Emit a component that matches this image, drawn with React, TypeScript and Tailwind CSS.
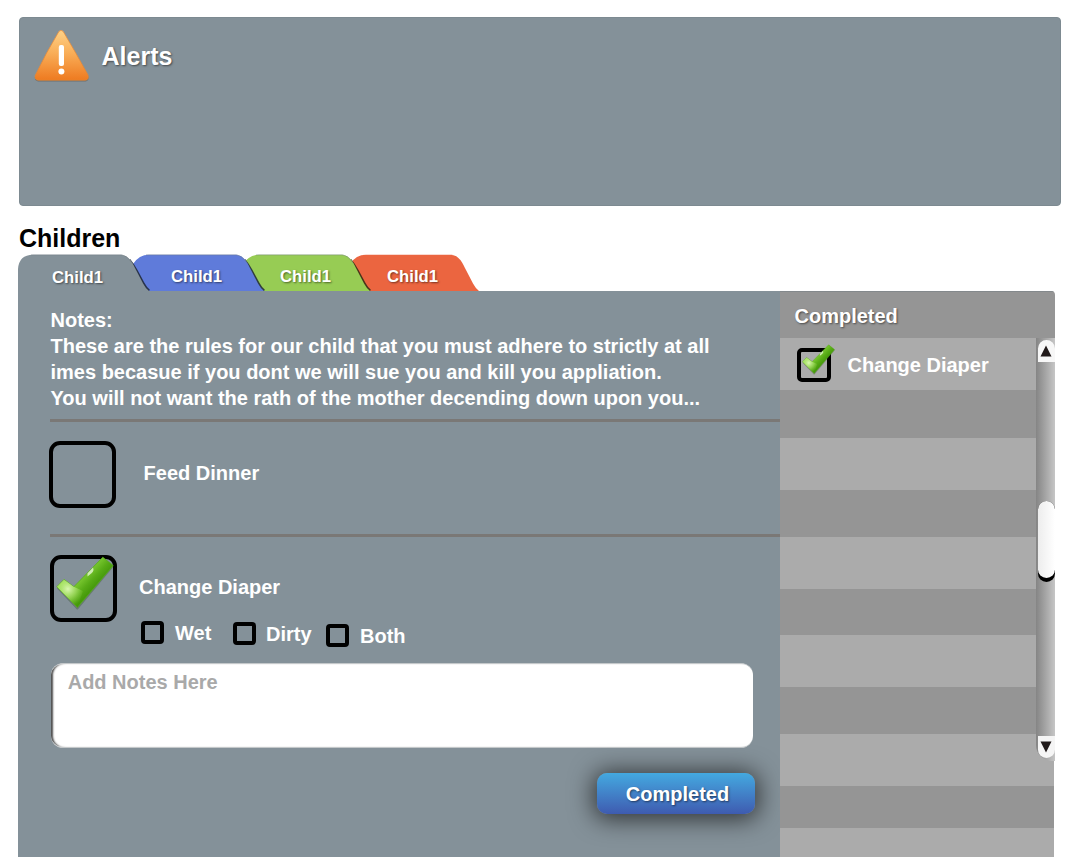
import React, { useId } from "react";

const textShadow = "[text-shadow:1px_1px_2px_rgba(0,0,0,0.5)]";

function WarningIcon() {
  return (
    <svg width="56" height="54" viewBox="0 0 56 54" className="block shrink-0">
      <defs>
        <linearGradient id="warn" x1="0" y1="0" x2="0" y2="1">
          <stop offset="0" stopColor="#ffd287" />
          <stop offset="0.45" stopColor="#f9ae58" />
          <stop offset="1" stopColor="#ee7a20" />
        </linearGradient>
      </defs>
      <path d="M24.8 2.2Q27 -0.6 29.3 2.2Q42 24 54.3 45.8Q55.6 51 51.6 51.4H4.2Q0.2 51 1 46.4Q12 24 24.8 2.2Z" fill="#4f4a45" opacity="0.45" />
      <path d="M24.8 1.6Q27 -1 29.3 1.6Q42 23 54 45Q55.2 49.9 51.4 50.2H4.2Q0.4 49.9 1.2 45.4Q12 23 24.8 1.6Z" fill="url(#warn)" stroke="#e98a35" strokeWidth="0.7" />
      <rect x="24.8" y="15" width="5.2" height="21" rx="2" fill="#fff" />
      <circle cx="27.4" cy="41.6" r="3" fill="#fff" />
    </svg>
  );
}

function CheckMark({ className }: { className: string }) {
  const id = useId();
  return (
    <svg viewBox="0 0 58 54" className={className}>
      <defs>
        <linearGradient id={id + "g"} gradientUnits="userSpaceOnUse" x1="20" y1="12" x2="41" y2="32">
          <stop offset="0" stopColor="#96dc4c" />
          <stop offset="0.4" stopColor="#78c62f" />
          <stop offset="0.68" stopColor="#57ab16" />
          <stop offset="1" stopColor="#3f9307" />
        </linearGradient>
        <radialGradient id={id + "h"} gradientUnits="userSpaceOnUse" cx="12" cy="33" r="17">
          <stop offset="0" stopColor="#e4fbc0" stopOpacity="0.9" />
          <stop offset="0.5" stopColor="#b9ea7c" stopOpacity="0.55" />
          <stop offset="1" stopColor="#9cda55" stopOpacity="0" />
        </radialGradient>
      </defs>
      <path d="M1 32.6L8 24L19 31L47 1.6L57.6 10.6L22 53.2Q21 54 20 52.6Z" fill="#24430f" opacity="0.3" />
      <path
        d="M0.8 30.8L8 23.4L17.8 30.8L46.8 1.2L57.2 9.6L21.4 51.4Z"
        fill={`url(#${id}g)`}
        stroke="#58ad1d"
        strokeWidth="0.8"
        strokeLinejoin="round"
      />
      <path d="M0.8 30.8L8 23.4L17.8 30.8L27 35L21.4 51.4Z" fill={`url(#${id}h)`} />
      <path d="M31.5 17.2L37 11.6Q38.5 15 35.5 17.2L31.5 20.5Z" fill="#eef9e2" opacity="0.75" />
    </svg>
  );
}

interface TabProps {
  label: string;
  fill: string;
  place: string;
  textPlace: string;
  width: number;
  edge?: string;
  square?: boolean;
}

function Tab({ label, fill, place, textPlace, width: w, edge, square }: TabProps) {
  const right = `C${w - 19} 0.7 ${w - 16} 10.5 ${w - 13} 16L${w - 6} 29.5Q${w - 3} 35 ${w} 37`;
  const left = square ? "M0 37V15Q1 0.7 15 0.7" : "M14 37L0 10Q6 0.7 16 0.7";
  return (
    <button className={`relative h-[37px] shrink-0 pt-2 text-left ${place}`}>
      <svg width={w + 4} height="37" viewBox={`0 0 ${w + 4} 37`} className="absolute top-0 left-0">
        {edge && (
          <path
            d={`M${w - 20} 6Q${w - 16} 11 ${w - 13} 16.5L${w - 6} 29.5Q${w - 3} 35 ${w} 37`}
            fill="none"
            stroke={edge}
            strokeWidth="3.2"
            opacity="0.85"
          />
        )}
        <path d={`${left}H${w - 29}${right}Z`} fill={fill} />
        {edge && <path d={`M13 0.9H${w - 28}Q${w - 22} 1.4 ${w - 17} 9`} fill="none" stroke="#6f7a80" strokeWidth="1" opacity="0.45" />}
      </svg>
      <span className={`relative block text-[16.7px] leading-5 text-white ${textPlace} ${textShadow}`}>{label}</span>
    </button>
  );
}

function SmallOption({ label, className, gap }: { label: string; className: string; gap: string }) {
  return (
    <label className={`flex items-start ${className} ${gap}`}>
      <span className="size-[23px] shrink-0 rounded-[4px] border-4 border-black" />
      <span className="-mt-px whitespace-nowrap leading-[26px]">{label}</span>
    </label>
  );
}

function ScrollBar() {
  return (
    <div className="absolute top-[47px] right-0 flex h-[423px] w-[19px] flex-col items-end rounded-bl-[16px] bg-linear-to-r from-[#858585] via-[#a5a5a5] to-[#c6c6c6] pr-[0.5px]">
      <div className="mt-[2px] flex h-[22px] w-[17px] shrink-0 justify-center rounded-t-[9px] bg-[#f7f7f7]">
        <svg width="12" height="12" viewBox="0 0 12 12" className="mt-[5px]">
          <path d="M6 0.5L11.5 11.5H0.5Z" fill="#211a1a" />
        </svg>
      </div>
      <div className="mt-[139px] h-[81px] w-[17px] shrink-0 rounded-[9px] bg-black">
        <div className="h-[77px] rounded-[9px] bg-linear-to-r from-[#ededed] to-white" />
      </div>
      <div className="mt-[154px] flex h-[22px] w-[17px] shrink-0 justify-center rounded-b-[9px] bg-[#f5f5f5]">
        <svg width="12" height="12" viewBox="0 0 12 12" className="mt-[5px]">
          <path d="M0.5 0.5H11.5L6 11.5Z" fill="#211a1a" />
        </svg>
      </div>
    </div>
  );
}

export default function App() {
  return (
    <div className="h-[857px] w-[1080px] overflow-hidden bg-white pt-[17px] font-['Liberation_Sans',Arial,sans-serif] text-[20px] font-bold text-white">
      <section className="ml-[19px] flex h-[189px] w-[1042px] items-start rounded-[4px] border border-[#7d8a91] bg-[#849199] pt-3 pl-[14px]">
        <WarningIcon />
        <h2 className={`mt-[11px] ml-[11.5px] text-[25px] leading-[30px] ${textShadow}`}>Alerts</h2>
      </section>

      <h1 className="mt-[17px] ml-[19px] text-[25px] leading-[30px] text-black">Children</h1>

      <nav className="mt-px ml-[18px] flex h-[37px]">
        <Tab label="Child1" fill="#849199" width={131} place="z-40 w-[115px]" textPlace="pl-[34px] pt-[2px]" edge="#1f2733" square />
        <Tab label="Child1" fill="#5f7bda" width={131} place="z-30 w-[110px]" textPlace="pl-[38px]" edge="#1d2438" />
        <Tab label="Child1" fill="#97cc54" width={127} place="z-20 w-[107px]" textPlace="pl-[37px]" edge="#2c2c14" />
        <Tab label="Child1" fill="#eb6540" width={129} place="z-10 w-[129px]" textPlace="pl-[37px]" />
      </nav>

      <main className="ml-[18px] flex h-[566px] w-[1037px]">
        <section className="w-[762px] shrink-0 bg-[#849199] pt-4">
          <p className="ml-[32.5px] h-[112px] whitespace-nowrap leading-[26px]">
            Notes:
            <br />
            These are the rules for our child that you must adhere to strictly at all
            <br />
            imes becasue if you dont we will sue you and kill you appliation.
            <br />
            You will not want the rath of the mother decending down upon you...
          </p>
          <div className="ml-8 h-[3px] bg-[#7a7876]" />
          <label className="ml-[31px] flex h-[112px] items-start pt-[19px]">
            <span className="size-[67px] rounded-[11px] border-4 border-black" />
            <span className="mt-[19px] ml-[27.6px] leading-[26px]">Feed Dinner</span>
          </label>
          <div className="ml-8 h-[3px] bg-[#7a7876]" />

          <div className="ml-8 flex h-[126px] items-start pt-[18px]">
            <span className="flex size-[67px] shrink-0 rounded-[11px] border-4 border-black">
              <CheckMark className="-mt-[3px] ml-[2px] h-[54px] w-[58px] shrink-0" />
            </span>
            <div className="ml-[22px]">
              <div className="mt-[19px] leading-[26px]">Change Diaper</div>
              <div className="ml-[2px] flex items-start">
                <SmallOption label="Wet" className="mt-[21px] w-[92px]" gap="gap-[11px]" />
                <SmallOption label="Dirty" className="mt-[22px] w-[93px]" gap="gap-[10px]" />
                <SmallOption label="Both" className="mt-6" gap="gap-[11px]" />
              </div>
            </div>
          </div>

          <textarea
            placeholder="Add Notes Here"
            className="ml-[33px] block h-[85px] w-[702px] resize-none rounded-[12px] border-y border-[#c4c8ca] bg-white pt-[5px] pl-[16.7px] leading-[26px] text-black shadow-[inset_3px_0_2px_-1px_rgba(0,0,0,0.7)] outline-none placeholder:text-[#a9a9a9] placeholder:opacity-100"
          />
          <button
            className={`mt-[25px] ml-[579px] block h-[41px] w-[158px] rounded-[10px] bg-linear-to-b from-[#43a9e0] to-[#3e5bb0] pt-px text-center leading-[40px] shadow-[0_2px_25px_3px_rgba(0,0,0,0.65)] ${textShadow}`}
          >
            <span className="pl-[3px]">Completed</span>
          </button>
        </section>

        <aside className="relative w-[275px] overflow-hidden rounded-tr-[4px]">
          <h2 className={`h-[47px] border-t border-[#84898c] bg-[#959595] pt-[11px] pl-[14.5px] leading-[26px] ${textShadow}`}>Completed</h2>
          <div className="mr-px">
            <div className="flex h-[52px] items-start bg-[#ababab] pt-[10px] pl-[17px]">
              <span className="flex size-[34px] shrink-0 rounded-[5px] border-4 border-black">
                <CheckMark className="-mt-[8px] ml-px h-[31px] w-[33px] shrink-0" />
              </span>
              <span className="mt-[4px] ml-[16.6px] leading-[26px]">Change Diaper</span>
            </div>
            <div className="h-12 bg-[#959595]" />
            <div className="h-[52px] bg-[#ababab]" />
            <div className="h-[47px] bg-[#959595]" />
            <div className="h-[52px] bg-[#ababab]" />
            <div className="h-[46px] bg-[#959595]" />
            <div className="h-[52px] bg-[#ababab]" />
            <div className="h-[47px] bg-[#959595]" />
            <div className="h-[52px] bg-[#ababab]" />
            <div className="h-[42px] bg-[#959595]" />
            <div className="h-[29px] bg-[#ababab]" />
          </div>
          <ScrollBar />
        </aside>
      </main>
    </div>
  );
}
